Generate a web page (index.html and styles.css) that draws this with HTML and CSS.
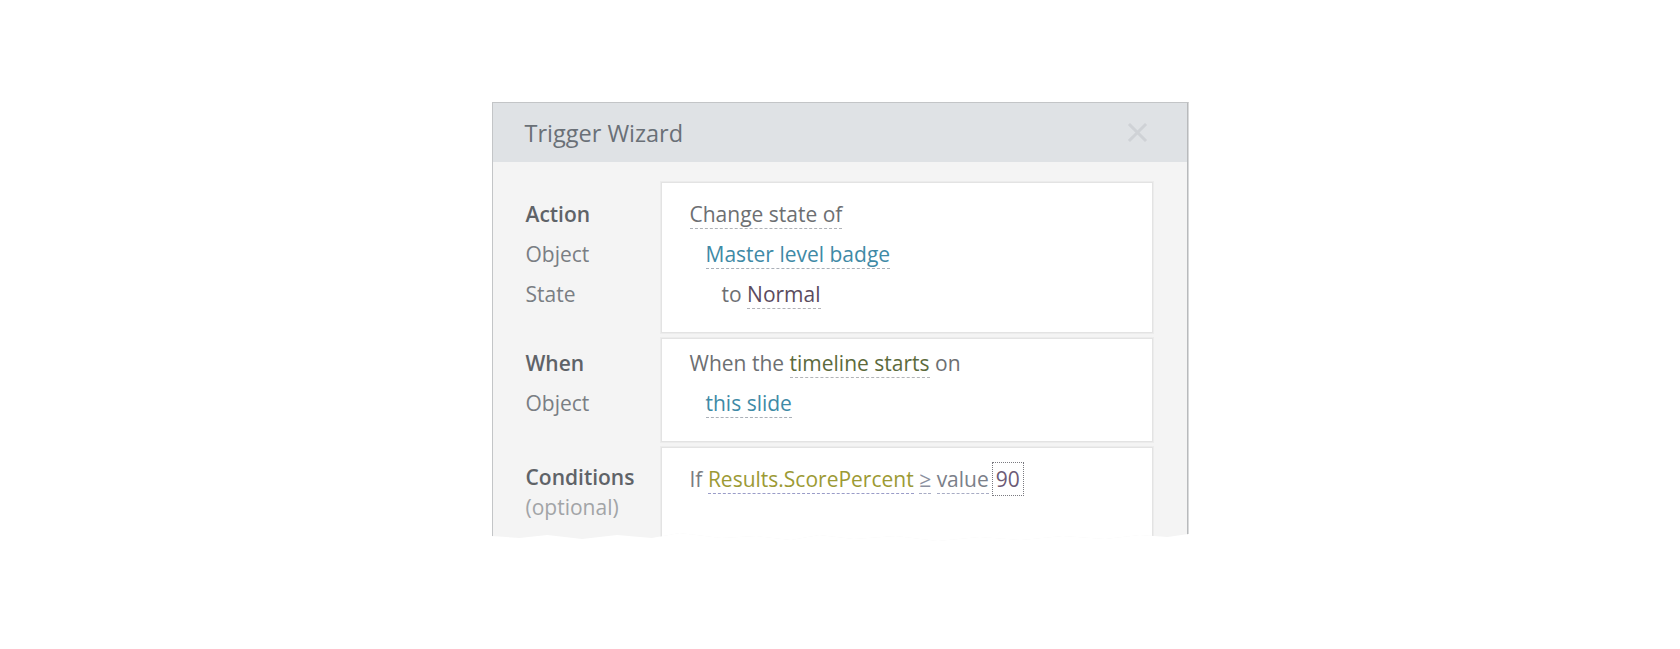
FILE: index.html
```html
<!DOCTYPE html>
<html lang="en">
<head>
<meta charset="utf-8">
<title>Trigger Wizard</title>
<link rel="stylesheet" href="styles.css">
</head>
<body>
<div class="dialog">
  <div class="dialog-header">
    <h1 class="dialog-title">Trigger Wizard</h1>
    <button class="close" aria-label="Close">
      <svg width="21" height="21" viewBox="0 0 21 21"><path d="M3 3L18 18M18 3L3 18" stroke="currentColor" stroke-width="3" stroke-linecap="square" fill="none"/></svg>
    </button>
  </div>
  <div class="dialog-body">
    <div class="row row-action">
      <div class="labels">
        <div class="label label-strong">Action</div>
        <div class="label">Object</div>
        <div class="label">State</div>
      </div>
      <div class="card">
        <div class="line"><span class="tok tok-plain">Change state of</span></div>
        <div class="line indent-1"><span class="tok tok-object">Master level badge</span></div>
        <div class="line indent-2"><span class="word">to</span> <span class="tok tok-state">Normal</span></div>
      </div>
    </div>
    <div class="row row-when">
      <div class="labels">
        <div class="label label-strong">When</div>
        <div class="label">Object</div>
      </div>
      <div class="card">
        <div class="line"><span class="word">When the</span> <span class="tok tok-event">timeline starts</span> <span class="word">on</span></div>
        <div class="line indent-1"><span class="tok tok-object">this slide</span></div>
      </div>
    </div>
    <div class="row row-cond">
      <div class="labels labels-tight">
        <div class="label label-strong">Conditions</div>
        <div class="label label-muted">(optional)</div>
      </div>
      <div class="card">
        <div class="line"><span class="word word-if">If</span> <span class="tok tok-var">Results.ScorePercent</span> <span class="tok tok-op">≥</span> <span class="tok tok-kind">value</span><span class="tok-value">90</span></div>
      </div>
    </div>
  </div>
</div>
</body>
</html>
```
FILE: styles.css
```css
* { box-sizing: border-box; }

html, body {
  margin: 0;
  padding: 0;
  background: #ffffff;
}

body {
  font-family: "Open Sans", "Noto Sans", "DejaVu Sans", sans-serif;
  height: 649px;
  overflow: hidden;
}

.dialog {
  width: 697px;
  height: 439px;
  margin: 102px auto 0;
  border: 1px solid #c3c5c7;
  border-right: 2px solid #b8babc;
  border-bottom: none;
  background: #f4f4f4;
  overflow: hidden;
  clip-path: polygon(0 0, 100% 0, 100% 432px, 97% 435px, 93% 433px, 88% 437px, 82% 434px, 76% 438px, 70% 435px, 64% 439px, 58% 434px, 52% 437px, 47% 433px, 43% 438px, 38% 434px, 33% 436px, 27% 431px, 23% 436px, 18% 433px, 13% 437px, 8% 433px, 4% 436px, 0 434px);
}

.dialog-header {
  height: 59px;
  background: #dfe2e5;
  display: flex;
  align-items: center;
  justify-content: space-between;
  padding: 0 39px 0 32px;
}

.dialog-title {
  margin: 0;
  font-size: 23.5px;
  font-weight: 400;
  color: #6a7077;
  padding-top: 1px;
}

.close {
  border: none;
  background: none;
  padding: 0;
  margin: 0;
  color: #cfd2d6;
  display: flex;
  align-items: center;
}

.dialog-body {
  padding: 20px 34px 0 33px;
  display: flex;
  flex-direction: column;
  gap: 5px;
}

.row {
  display: grid;
  grid-template-columns: 135px 1fr;
}

.labels {
  font-size: 21px;
  line-height: 40px;
}

.label { color: #7a7e83; }
.label-strong { color: #5f6368; font-weight: 600; }
.label-muted { color: #a2a4a7; }
.labels-tight { line-height: 30px; }

.card {
  background: #ffffff;
  border: 1px solid #e3e3e3;
  box-shadow: 0 0 0 1px #ececec;
  font-size: 21px;
  line-height: 40px;
  color: #6d6f72;
  padding-left: 28px;
}

.row-action .labels { padding-top: 12px; }
.row-action .card { padding-top: 11px; padding-bottom: 18px; }
.row-when .labels { padding-top: 5px; }
.row-when .card { padding-top: 4px; padding-bottom: 18px; }
.row-cond .labels { padding-top: 15px; }
.row-cond .card { padding-top: 11px; height: 200px; }

.line { white-space: nowrap; }
.indent-1 { padding-left: 16px; }
.indent-2 { padding-left: 32px; }

.word { color: #6d6f72; }
.word-if { color: #7b7d80; }

.tok {
  border-bottom: 1px dashed #b0b3b8;
}
.tok-plain { color: #6d6f72; }
.tok-object { color: #3f8aa6; border-bottom-color: #aab0b8; }
.tok-state { color: #5b4b5e; border-bottom-color: #b2b2b8; }
.tok-event { color: #5c6a3c; border-bottom-color: #b2b4b8; }
.tok-var { color: #9c9a34; border-bottom-color: #9a9cc8; }
.tok-op { color: #8b90a0; border-bottom-color: #a8acc4; }
.tok-kind { color: #7b8089; border-bottom-color: #a8acc4; }

.tok-value {
  color: #6c5a75;
  border: 1px dotted #7a7a80;
  padding: 2px 3px;
  margin-left: 3px;
}
```
